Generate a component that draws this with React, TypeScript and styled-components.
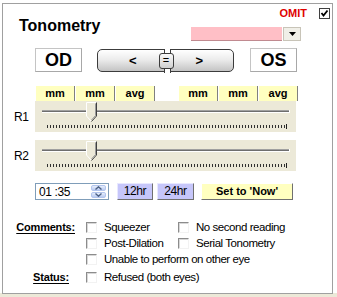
import React from 'react';
import styled, { createGlobalStyle } from 'styled-components';

const GlobalStyle = createGlobalStyle`
  html, body {
    margin: 0;
    padding: 0;
  }
  body {
    font-family: "Liberation Sans", Arial, sans-serif;
    background: #fff;
  }
`

const Page = styled.div`
  width: 337px;
  height: 297px;
  padding: 3px 0 0 2px;
  box-sizing: border-box;
  background: linear-gradient(to bottom, #fff 293px, #ece9d8 293px);
  overflow: hidden;
`
const Panel = styled.div`
  width: 331px;
  height: 291px;
  box-sizing: border-box;
  border: 1px solid #a0a0a0;
  background: #fff;
  display: flex;
  flex-direction: column;
`
const Header = styled.div`
  display: flex;
  justify-content: space-between;
  height: 44px;
`
const Title = styled.div`
  font-weight: bold;
  font-size: 16px;
  line-height: 18px;
  padding: 13px 0 0 16px;
  color: #000;
`
const HeaderRight = styled.div`
  display: flex;
  flex-direction: column;
  align-items: flex-end;
`
const OmitRow = styled.div`
  display: flex;
  align-items: center;
  gap: 12px;
  margin: 3px 2px 0 0;
  height: 12px;
`
const OmitLabel = styled.span`
  color: #e00000;
  font-weight: bold;
  font-size: 11px;
  line-height: 12px;
`
const OmitBox = styled.span`
  width: 11px;
  height: 11px;
  box-sizing: border-box;
  border: 1px solid #404040;
  background: #fff;
  display: flex;
  align-items: center;
  justify-content: center;
`
const Dropdown = styled.div`
  display: flex;
  margin: 8px 31px 0 0;
  height: 14px;
`
const DropField = styled.div`
  width: 91px;
  background: #ffbfc6;
  border-bottom: 1px solid #c08a90;
`
const DropArrow = styled.div`
  width: 18px;
  margin-left: 1px;
  background: #f0efe8;
  border: 1px solid #c8c4b8;
  box-sizing: border-box;
  display: flex;
  align-items: center;
  justify-content: center;
`
const ControlRow = styled.div`
  display: flex;
  align-items: flex-start;
  padding-left: 32px;
  height: 24px;
`
const EyeButton = styled.div<{ $gap?: number }>`
  width: 47px;
  height: 24px;
  margin-left: ${p => p.$gap || 0}px;
  box-sizing: border-box;
  border: 1px solid #c4c4c4;
  border-right-color: #a8a8a8;
  border-bottom-color: #a8a8a8;
  background: #fff;
  font-weight: bold;
  font-size: 18px;
  line-height: 22px;
  text-align: center;
`
const Pill = styled.div`
  width: 137px;
  height: 23px;
  margin: 1px 0 0 15px;
  box-sizing: border-box;
  border: 1px solid #3c3c3c;
  border-radius: 5px;
  background: linear-gradient(to bottom, #ffffff 0%, #ececec 45%, #c4c4c4 100%);
  display: flex;
  align-items: center;
  justify-content: space-between;
  padding: 0 30px 0 31px;
`
const Arrow = styled.span`
  font-weight: bold;
  font-size: 13px;
  line-height: 14px;
`
const EqualBox = styled.span`
  width: 15px;
  height: 16px;
  box-sizing: border-box;
  border: 1px solid #3c3c3c;
  border-radius: 3px;
  background: linear-gradient(to bottom, #fafafa, #d0d0d0);
  font-size: 11px;
  line-height: 13px;
  text-align: center;
  position: relative;
`
const Notch = styled.span<{ $bottom?: boolean }>`
  position: absolute;
  left: 4px;
  ${p => (p.$bottom ? 'bottom: -5px;' : 'top: -5px;')}
  width: 5px;
  height: 4px;
  border-left: 1px solid #3c3c3c;
  border-right: 1px solid #3c3c3c;
  background: #fff;
`
const HeadRow = styled.div`
  display: flex;
  padding-left: 32px;
  margin-top: 14px;
  gap: 23px;
`
const HeadGroup = styled.div`
  display: flex;
`
const HeadCell = styled.div`
  width: 40px;
  height: 15px;
  box-sizing: border-box;
  background: #ffffc0;
  border-left: 1px solid #fff;
  border-right: 1px solid #808080;
  font-weight: bold;
  font-size: 11px;
  line-height: 15px;
  text-align: center;
`
const SliderRow = styled.div<{ $top: number }>`
  display: flex;
  align-items: center;
  margin-top: ${p => p.$top}px;
`
const RowLabel = styled.div`
  width: 32px;
  box-sizing: border-box;
  padding-left: 11px;
  font-size: 12px;
  letter-spacing: -0.3px;
`
const SliderBox = styled.div`
  width: 261px;
  height: 31px;
  background: #ece9d8;
  display: flex;
`
const TimeRow = styled.div`
  display: flex;
  align-items: center;
  padding-left: 32px;
  margin-top: 12px;
  height: 17px;
`
const TimeInput = styled.div`
  width: 74px;
  height: 17px;
  box-sizing: border-box;
  border: 1px solid #7f9db9;
  display: flex;
  align-items: center;
  justify-content: space-between;
  padding: 0 2px 0 3px;
  font-size: 12px;
  letter-spacing: -0.4px;
`
const Spinner = styled.div`
  width: 15px;
  height: 13px;
  display: flex;
  flex-direction: column;
  gap: 1px;
`
const SpinHalf = styled.div`
  flex: 1;
  border-radius: 2px;
  background: linear-gradient(to bottom, #e6eefc, #b9caf0);
  border: 1px solid #b3c5ee;
  display: flex;
  align-items: center;
  justify-content: center;
`
const ClockButton = styled.div<{ $w: number; $gap: number }>`
  width: ${p => p.$w}px;
  height: 17px;
  margin-left: ${p => p.$gap}px;
  box-sizing: border-box;
  background: #c6c6fa;
  border-top: 1px solid #e8e8ff;
  border-left: 1px solid #e8e8ff;
  border-right: 1px solid #707070;
  border-bottom: 1px solid #707070;
  font-size: 12px;
  letter-spacing: -0.4px;
  line-height: 15px;
  text-align: center;
`
const NowButton = styled(ClockButton)`
  background: #ffffc0;
  border-top-color: #fff;
  border-left-color: #fff;
  font-weight: bold;
  font-size: 11px;
  letter-spacing: 0;
`
const Comments = styled.div`
  display: grid;
  grid-template-columns: 83px 92px 1fr;
  grid-auto-rows: 16px;
  margin-top: 19px;
  align-items: center;
`
const SectionLabel = styled.div<{ $pad?: number; $top?: number }>`
  text-align: right;
  padding-right: ${p => p.$pad || 11}px;
  margin-top: ${p => p.$top || 0}px;
  font-weight: bold;
  font-size: 11px;
  letter-spacing: -0.2px;
  text-decoration: underline;
  text-underline-offset: 2px;
`
const Option = styled.label<{ $span?: boolean; $top?: number }>`
  display: flex;
  align-items: center;
  gap: 7px;
  font-size: 11.5px;
  letter-spacing: -0.45px;
  color: #000;
  white-space: nowrap;
  ${p => (p.$span ? 'grid-column: 2 / 4;' : '')}
  margin-top: ${p => p.$top || 0}px;
`
const CheckBox = styled.span`
  width: 11px;
  height: 11px;
  box-sizing: border-box;
  border-top: 1px solid #8c8c8c;
  border-left: 1px solid #8c8c8c;
  border-right: 1px solid #f2f2f2;
  border-bottom: 1px solid #f2f2f2;
  box-shadow: inset 1px 1px 0 #d8d8d8;
  background: #fff;
  flex: none;
`
const Spacer = styled.div``

const Slider = ({ label, pos, top }: { label: string; pos: number; top: number }) => {
  const ticks: number[] = [];
  for (let x = 12; x <= 249; x += 3) ticks.push(x);
  return (
    <SliderRow $top={top}>
      <RowLabel>{label}</RowLabel>
      <SliderBox>
        <svg width="261" height="31" viewBox="0 0 261 31">
          <rect x="7" y="9" width="248" height="1" fill="#a0a0a0" />
          <rect x="7" y="10" width="248" height="1" fill="#6e6e6e" />
          <rect x="7" y="11" width="248" height="1" fill="#ffffff" />
          <rect x="254" y="9" width="1" height="3" fill="#ffffff" />
          {ticks.map(x => (
            <rect key={x} x={x} y="24" width="1" height="3" fill="#303030" />
          ))}
          <rect x="251" y="23" width="1" height="5" fill="#202020" />
          <polygon points={`${pos},1 ${pos + 11},1 ${pos + 11},15 ${pos + 5.5},21 ${pos},15`} fill="#ece9d8" />
          <polyline points={`${pos + 0.5},15 ${pos + 0.5},1.5 ${pos + 10.5},1.5`} fill="none" stroke="#fff" />
          <polyline points={`${pos + 10.5},1.5 ${pos + 10.5},15 ${pos + 5.5},20.5`} fill="none" stroke="#404040" />
          <polyline points={`${pos + 9.5},2.5 ${pos + 9.5},14.5 ${pos + 5.5},19`} fill="none" stroke="#9a9a9a" />
          <line x1={pos + 0.5} y1="15" x2={pos + 5} y2="20" stroke="#fff" />
        </svg>
      </SliderBox>
    </SliderRow>
  );
};

const App = () => {
  return (
    <Page>
      <GlobalStyle />
      <Panel>
        <Header>
          <Title>Tonometry</Title>
          <HeaderRight>
            <OmitRow>
              <OmitLabel>OMIT</OmitLabel>
              <OmitBox>
                <svg width="9" height="9" viewBox="0 0 9 9">
                  <polyline points="1.5,4 3.5,6.5 7.5,1.5" fill="none" stroke="#000" strokeWidth="1.8" />
                </svg>
              </OmitBox>
            </OmitRow>
            <Dropdown>
              <DropField />
              <DropArrow>
                <svg width="7" height="4" viewBox="0 0 7 4">
                  <polygon points="0,0 7,0 3.5,4" fill="#000" />
                </svg>
              </DropArrow>
            </Dropdown>
          </HeaderRight>
        </Header>

        <ControlRow>
          <EyeButton>OD</EyeButton>
          <Pill>
            <Arrow>&lt;</Arrow>
            <EqualBox>
              <Notch />
              =
              <Notch $bottom />
            </EqualBox>
            <Arrow>&gt;</Arrow>
          </Pill>
          <EyeButton $gap={16}>OS</EyeButton>
        </ControlRow>

        <HeadRow>
          <HeadGroup>
            <HeadCell>mm</HeadCell>
            <HeadCell>mm</HeadCell>
            <HeadCell>avg</HeadCell>
          </HeadGroup>
          <HeadGroup>
            <HeadCell>mm</HeadCell>
            <HeadCell>mm</HeadCell>
            <HeadCell>avg</HeadCell>
          </HeadGroup>
        </HeadRow>

        <Slider label="R1" pos={51} top={0} />
        <Slider label="R2" pos={51} top={8} />

        <TimeRow>
          <TimeInput>
            <span>01 :35</span>
            <Spinner>
              <SpinHalf>
                <svg width="7" height="4" viewBox="0 0 7 4">
                  <polyline points="0.5,3.5 3.5,0.8 6.5,3.5" fill="none" stroke="#4d6185" strokeWidth="1.4" />
                </svg>
              </SpinHalf>
              <SpinHalf>
                <svg width="7" height="4" viewBox="0 0 7 4">
                  <polyline points="0.5,0.5 3.5,3.2 6.5,0.5" fill="none" stroke="#4d6185" strokeWidth="1.4" />
                </svg>
              </SpinHalf>
            </Spinner>
          </TimeInput>
          <ClockButton $w={36} $gap={8}>12hr</ClockButton>
          <ClockButton $w={37} $gap={4}>24hr</ClockButton>
          <NowButton $w={92} $gap={7}>Set to 'Now'</NowButton>
        </TimeRow>

        <Comments>
          <SectionLabel>Comments:</SectionLabel>
          <Option><CheckBox />Squeezer</Option>
          <Option><CheckBox />No second reading</Option>
          <Spacer />
          <Option><CheckBox />Post-Dilation</Option>
          <Option><CheckBox />Serial Tonometry</Option>
          <Spacer />
          <Option $span><CheckBox />Unable to perform on other eye</Option>
          <SectionLabel $pad={17} $top={4}>Status:</SectionLabel>
          <Option $span $top={4}><CheckBox />Refused (both eyes)</Option>
        </Comments>
      </Panel>
    </Page>
  );
};

export default App;
